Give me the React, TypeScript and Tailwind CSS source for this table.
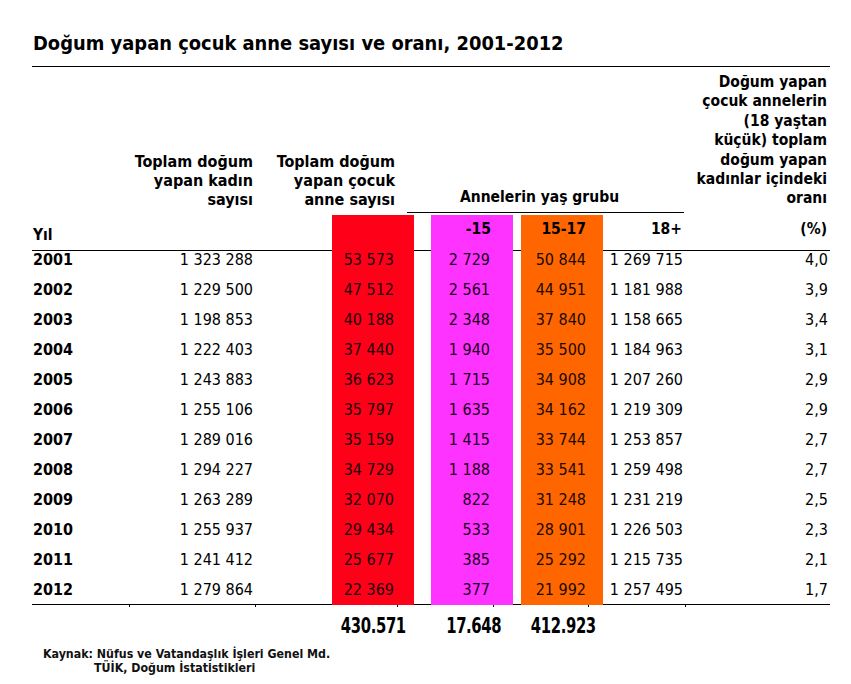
import React from "react";

const years = [2001, 2002, 2003, 2004, 2005, 2006, 2007, 2008, 2009, 2010, 2011, 2012];
const kadin = ["1 323 288", "1 229 500", "1 198 853", "1 222 403", "1 243 883", "1 255 106", "1 289 016", "1 294 227", "1 263 289", "1 255 937", "1 241 412", "1 279 864"];
const cocuk = ["53 573", "47 512", "40 188", "37 440", "36 623", "35 797", "35 159", "34 729", "32 070", "29 434", "25 677", "22 369"];
const u15 = ["2 729", "2 561", "2 348", "1 940", "1 715", "1 635", "1 415", "1 188", "822", "533", "385", "377"];
const a1517 = ["50 844", "44 951", "37 840", "35 500", "34 908", "34 162", "33 744", "33 541", "31 248", "28 901", "25 292", "21 992"];
const a18 = ["1 269 715", "1 181 988", "1 158 665", "1 184 963", "1 207 260", "1 219 309", "1 253 857", "1 259 498", "1 231 219", "1 226 503", "1 215 735", "1 257 495"];
const oran = ["4,0", "3,9", "3,4", "3,1", "2,9", "2,9", "2,7", "2,7", "2,5", "2,3", "2,1", "1,7"];

const GRID = "grid grid-cols-[108px_115px_77px_82px_17px_82px_8px_82px_82px_145px]";
const FONT = "font-['DejaVu_Sans_Condensed','DejaVu_Sans',sans-serif]";

export default function App() {
  return (
    <div className={`w-[851px] h-[684px] bg-white text-black ${FONT} [font-stretch:condensed]`}>
      <div className="pl-[32px] w-[830px]">
        {/* Title */}
        <div className="pt-[31px] pb-[9px] border-b border-black">
          <div className="pl-[1px] text-[19.9px] leading-[26px] font-bold whitespace-nowrap">
            Doğum yapan çocuk anne sayısı ve oranı, 2001-2012
          </div>
        </div>

        {/* Header labels */}
        <div className={`${GRID} items-end text-[15.5px] font-bold leading-[19.4px]`}>
          <div className="col-span-2 text-right pr-[2px] pb-[3px] text-[16px] whitespace-nowrap">
            Toplam doğum<br />yapan kadın<br />sayısı
          </div>
          <div className="col-span-2 text-right pr-[19px] pb-[3px] text-[16px] whitespace-nowrap">
            Toplam doğum<br />yapan çocuk<br />anne sayısı
          </div>
          <div className="col-span-5 ml-[-7px] mr-[1px] border-b border-black text-center pr-[12px] pb-[4px] whitespace-nowrap">
            Annelerin yaş grubu
          </div>
          <div className="text-right pr-[3px] pt-[6px] pb-[4px] whitespace-nowrap">
            Doğum yapan<br />çocuk annelerin<br />(18 yaştan<br />küçük) toplam<br />doğum yapan<br />kadınlar içindeki<br />oranı
          </div>
        </div>

        {/* Column header row */}
        <div className={`${GRID} mt-[2px] h-[29px] text-[15.5px] font-bold leading-[29px]`}>
          <div className="border-b border-black pl-[1px] pt-[6px]">Yıl</div>
          <div className="border-b border-black" />
          <div className="border-b border-black" />
          <div className="bg-[#ff0019]" />
          <div className="border-b border-black" />
          <div className="bg-[#ff33ff] text-right pr-[22px]">-15</div>
          <div className="border-b border-black" />
          <div className="bg-[#ff6600] text-right pr-[17px]">15-17</div>
          <div className="border-b border-black text-right pr-[3px]">18+</div>
          <div className="border-b border-black text-right pr-[3px]">(%)</div>
        </div>

        {/* Data rows */}
        {years.map((y, i) => {
          const last = i === years.length - 1;
          return (
            <div key={y} className={`${GRID} ${last ? "h-[28px]" : "h-[30px]"} text-[16px] leading-[31px] whitespace-nowrap`}>
              <div className="font-bold pl-[1px]">{y}</div>
              <div className="text-right pr-[2px]">{kadin[i]}</div>
              <div />
              <div className="bg-[#ff0019] text-right pr-[20px] text-[#1a0008]">{cocuk[i]}</div>
              <div />
              <div className="bg-[#ff33ff] text-right pr-[23px] text-[#1a001a]">{u15[i]}</div>
              <div />
              <div className="bg-[#ff6600] text-right pr-[17px] text-[#1a0a00]">{a1517[i]}</div>
              <div className="text-right pr-[2px]">{a18[i]}</div>
              <div className="text-right pr-[2px]">{oran[i]}</div>
            </div>
          );
        })}

        {/* Bottom line with ticks */}
        <div className="mt-[2px] border-t border-black" />
        <div className="flex h-[2px]">
          <div className="w-[97px]" />
          <div className="w-[1px] bg-black" />
          <div className="w-[125px]" />
          <div className="w-[1px] bg-black" />
          <div className="w-[141px]" />
          <div className="w-[1px] bg-black" />
          <div className="w-[95px]" />
          <div className="w-[1px] bg-black" />
          <div className="w-[94px]" />
          <div className="w-[1px] bg-black" />
          <div className="w-[96px]" />
          <div className="w-[1px] bg-black" />
        </div>

        {/* Totals */}
        <div className={`${GRID} h-[38px] items-center text-[22px] font-bold`}>
          <div />
          <div />
          <div />
          <div className="flex justify-center"><span className="inline-block scale-x-[0.75] tracking-[-0.5px]">430.571</span></div>
          <div />
          <div className="flex justify-center pl-[3px]"><span className="inline-block scale-x-[0.75] tracking-[-0.5px]">17.648</span></div>
          <div />
          <div className="flex justify-center pl-[3px]"><span className="inline-block scale-x-[0.75] tracking-[-0.5px]">412.923</span></div>
          <div />
          <div />
        </div>

        {/* Source */}
        <div className="pt-[2px] pl-[11px] text-[12.3px] font-bold leading-[14px] text-[#111]">
          <div>Kaynak: Nüfus ve Vatandaşlık İşleri Genel Md.</div>
          <div className="pl-[51px]">TÜİK, Doğum İstatistikleri</div>
        </div>
      </div>
    </div>
  );
}
